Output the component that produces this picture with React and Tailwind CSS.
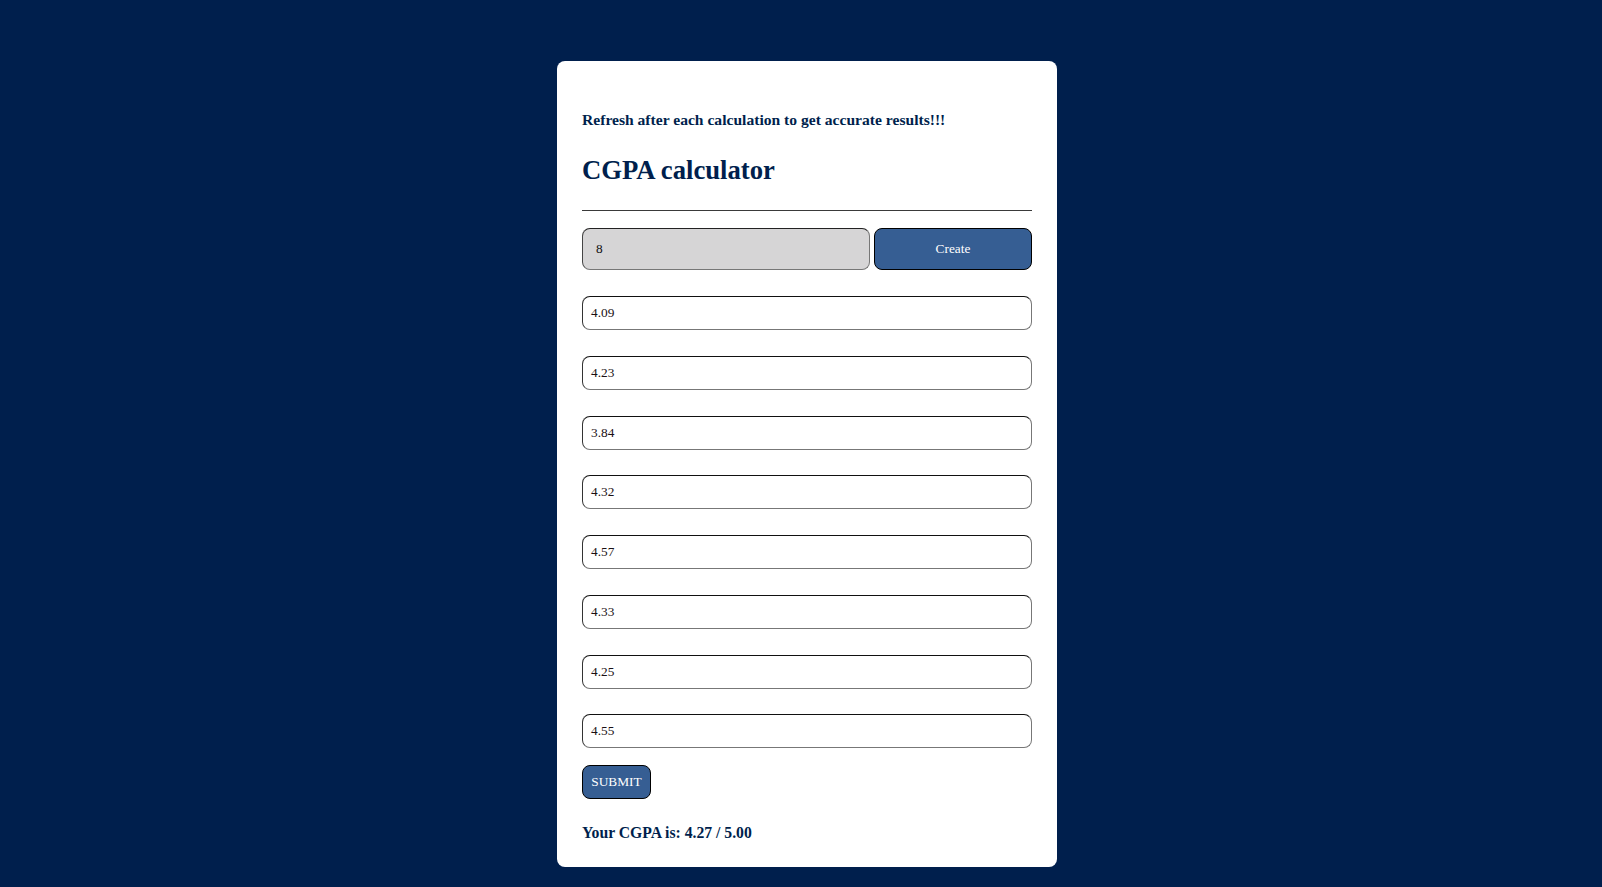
import React from "react";

const grades = ["4.09", "4.23", "3.84", "4.32", "4.57", "4.33", "4.25", "4.55"];

export default function App() {
  return (
    <div
      className="min-h-screen w-full bg-[#001f4d] pt-[61px] pl-[12px] flex justify-center items-start"
      style={{ fontFamily: '"Liberation Serif", "Times New Roman", serif' }}
    >
      <div className="w-[500px] h-[806px] bg-white rounded-[8px] px-[25px] pt-[49.5px] pb-[25px] flex flex-col text-[#001f4d]">
        <h4 className="text-[15.6px] leading-[18px] font-bold m-0">
          Refresh after each calculation to get accurate results!!!
        </h4>
        <h2 className="text-[26.7px] leading-[30px] font-bold mt-[26.2px]">CGPA calculator</h2>
        <div className="mt-[25.7px] border-t border-[#3a3a3a]" />
        <div className="mt-[17px] flex gap-[4px] h-[42px]">
          <div className="w-[288px] h-full bg-[#d6d5d6] rounded-[8px] border border-t-[#222] border-l-[#444] border-r-[#777] border-b-[#777] flex items-center pl-[13px] text-[13.33px] text-[#111]">
            8
          </div>
          <button className="flex-1 h-full bg-[#365e93] rounded-[8px] border border-black text-white text-[13.33px] flex items-center justify-center">
            Create
          </button>
        </div>
        <div className="mt-[26px] flex flex-col gap-[25.7px]">
          {grades.map((g) => (
            <div
              key={g}
              className="h-[34px] rounded-[8px] border border-t-[#111] border-l-[#333] border-r-[#777] border-b-[#777] flex items-center pl-[8px] text-[13.33px] text-[#1a1014]"
            >
              {g}
            </div>
          ))}
        </div>
        <div className="mt-[17px]">
          <button className="h-[34px] w-[69px] bg-[#365e93] rounded-[8px] border border-black text-white text-[13.33px] flex items-center justify-center">
            SUBMIT
          </button>
        </div>
        <p className="mt-[24.5px] text-[15.7px] leading-[18px] font-bold">Your CGPA is: 4.27 / 5.00</p>
      </div>
    </div>
  );
}
